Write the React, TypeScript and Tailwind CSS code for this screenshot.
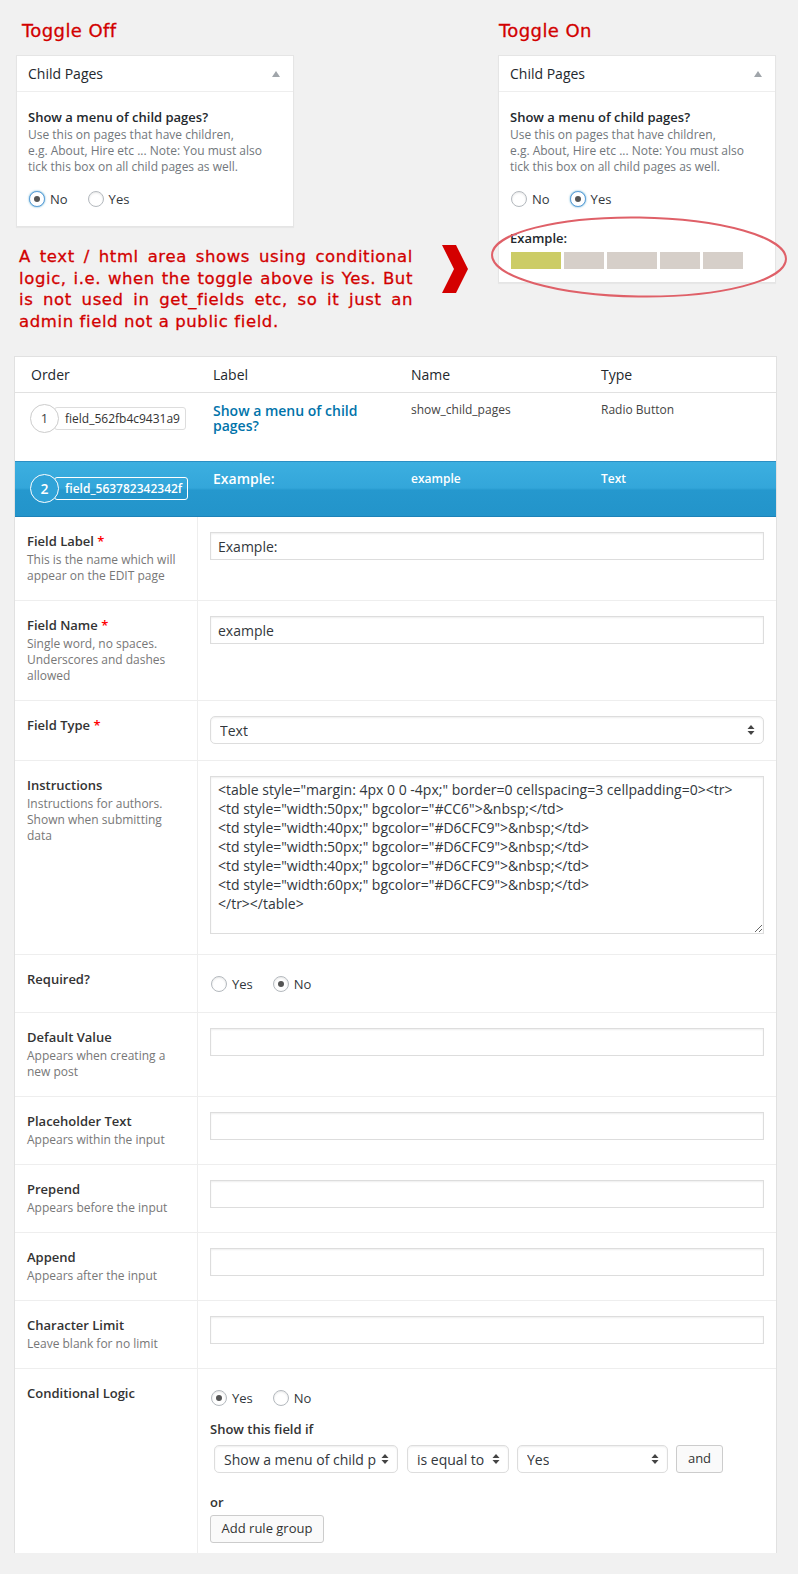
import React from "react"

function Radio({ label, checked, focus }: { label: string; checked?: boolean; focus?: boolean }) {
  return (
    <span className="flex items-center gap-[5px]">
      <span
        className={
          focus
            ? "flex h-4 w-4 items-center justify-center rounded-full border border-[#5b9dd9] bg-white shadow-[0_0_2px_rgba(30,140,190,0.8)]"
            : "flex h-4 w-4 items-center justify-center rounded-full border border-[#b4b9be] bg-white shadow-[inset_0_1px_2px_rgba(0,0,0,0.1)]"
        }
      >
        {checked && <span className="h-[6px] w-[6px] rounded-full bg-[#555]" />}
      </span>
      <span className="text-[13px] leading-4 text-[#32373c]">{label}</span>
    </span>
  )
}

function Arrows() {
  return (
    <svg width="8" height="12" viewBox="0 0 8 12" className="shrink-0">
      <polygon points="4,1 7.5,5 0.5,5" fill="#444" />
      <polygon points="0.5,7 7.5,7 4,11" fill="#444" />
    </svg>
  )
}

function Select({ value, className }: { value: string; className: string }) {
  return (
    <div
      className={
        "flex h-[28px] items-center justify-between rounded-[5px] border border-[#ddd] bg-white pl-[9px] pr-[8px] text-[14px] text-[#32373c] shadow-[inset_0_1px_2px_rgba(0,0,0,0.07)] " +
        className
      }
    >
      <span className="overflow-hidden whitespace-nowrap">{value}</span>
      <Arrows />
    </div>
  )
}

function Input({ value }: { value?: string }) {
  return (
    <div className="flex h-[28px] w-full items-center border border-[#ddd] bg-white pl-[7px] text-[14px] text-[#32373c] shadow-[inset_0_1px_2px_rgba(0,0,0,0.07)]">
      {value}
    </div>
  )
}

function ChildPagesBox({ on }: { on?: boolean }) {
  return (
    <div className="w-[278px] border border-[#e5e5e5] bg-white shadow-[0_1px_1px_rgba(0,0,0,0.04)]">
      <div className="flex h-[36px] items-center justify-between border-b border-[#eee] pl-[11px] pr-[13px]">
        <span className="text-[14px] text-[#23282d]">Child Pages</span>
        <svg width="8" height="6" viewBox="0 0 8 6">
          <polygon points="0,6 4,0 8,6" fill="#a0a5aa" />
        </svg>
      </div>
      <div className={on ? "px-[11px] pb-[13px] pt-[17px]" : "px-[11px] pb-[19px] pt-[17px]"}>
        <div className="text-[13px] font-semibold leading-4 text-[#23282d]">Show a menu of child pages?</div>
        <div className="mt-[2px] whitespace-nowrap text-[12px] leading-4 text-[#72777c]">
          Use this on pages that have children,
          <br />
          e.g. About, Hire etc ... Note: You must also
          <br />
          tick this box on all child pages as well.
        </div>
        <div className="mt-[16px] flex gap-[20px] pl-px">
          <Radio label="No" checked={!on} focus={!on} />
          <Radio label="Yes" checked={on} focus={on} />
        </div>
        {on && (
          <>
            <div className="mt-[23px] text-[13px] font-semibold leading-4 text-[#23282d]">Example:</div>
            <div className="mt-[6px] flex gap-[3px] pl-px">
              <div className="h-[17px] w-[50px] bg-[#cccc66]" />
              <div className="h-[17px] w-[40px] bg-[#d6cfc9]" />
              <div className="h-[17px] w-[50px] bg-[#d6cfc9]" />
              <div className="h-[17px] w-[40px] bg-[#d6cfc9]" />
              <div className="h-[17px] w-[40px] bg-[#d6cfc9]" />
            </div>
          </>
        )}
      </div>
    </div>
  )
}

function Row({
  label,
  required,
  desc,
  right,
  children,
}: {
  label: string
  required?: boolean
  desc?: string[]
  right?: string
  children?: React.ReactNode
}) {
  return (
    <div className="flex border-t border-[#eee]">
      <div className="w-[183px] shrink-0 border-r border-[#eee] pb-[16px] pl-[12px] pt-[16px]">
        <div className="text-[13px] font-semibold leading-4 text-[#333]">
          {label}
          {required && <span className="text-[#f00]"> *</span>}
        </div>
        {desc && (
          <div className="mt-[3px] whitespace-nowrap text-[12px] leading-4 text-[#777]">
            {desc.map((d) => (
              <div key={d}>{d}</div>
            ))}
          </div>
        )}
      </div>
      <div className={"flex-1 pl-[12px] pr-[12px] " + (right ?? "pb-[16px] pt-[15px]")}>{children}</div>
    </div>
  )
}

const redText = "font-['DejaVu_Sans',sans-serif] text-[#d20000] [-webkit-text-stroke:0.3px_#d20000]"

const instructions = `<table style="margin: 4px 0 0 -4px;" border=0 cellspacing=3 cellpadding=0><tr>
<td style="width:50px;" bgcolor="#CC6">&nbsp;</td>
<td style="width:40px;" bgcolor="#D6CFC9">&nbsp;</td>
<td style="width:50px;" bgcolor="#D6CFC9">&nbsp;</td>
<td style="width:40px;" bgcolor="#D6CFC9">&nbsp;</td>
<td style="width:60px;" bgcolor="#D6CFC9">&nbsp;</td>
</tr></table>`

export default function App() {
  return (
    <div className="min-h-[1574px] w-[798px] bg-[#f1f1f1] font-['Open_Sans',sans-serif] text-[#444]">
      <div className="flex h-[356px]">
        <div className="w-[498px] shrink-0 pl-[16px] pt-[20px]">
          <div className={"ml-[6px] h-[22px] text-[18px] leading-[22px] tracking-[0.4px] " + redText}>Toggle Off</div>
          <div className="mt-[13px]">
            <ChildPagesBox />
          </div>
          <div className="mt-[19px] flex items-start">
            <div className={"ml-[3px] w-[394px] text-[16.5px] leading-[21.7px] tracking-[0.6px] " + redText}>
              <div className="text-justify [text-align-last:justify]">A text / html area shows using conditional</div>
              <div className="text-justify [text-align-last:justify]">logic, i.e. when the toggle above is Yes. But</div>
              <div className="text-justify [text-align-last:justify]">is not used in get_fields etc, so it just an</div>
              <div>admin field not a public field.</div>
            </div>
            <svg width="26" height="48" viewBox="0 0 26 48" className="ml-[29px] mt-[-1px]">
              <polygon points="0,0 14,0 26,24 14,48 0,48 12,24" fill="#d40000" />
            </svg>
          </div>
        </div>
        <div className="relative w-[278px] shrink-0 pt-[20px]">
          <div className={"ml-px h-[22px] text-[18px] leading-[22px] tracking-[0.4px] " + redText}>Toggle On</div>
          <div className="mt-[13px]">
            <ChildPagesBox on />
          </div>
          <svg width="300" height="84" viewBox="0 0 300 84" className="absolute left-[-8px] top-[216px]">
            <ellipse cx="149" cy="41" rx="147" ry="39.5" fill="none" stroke="#df6068" strokeWidth="2" transform="rotate(0.8 149 41)" />
          </svg>
        </div>
      </div>

      <div className="ml-[14px] w-[763px] border border-b-0 border-[#e1e1e1] bg-white">
        <div className="flex h-[36px] items-center border-b border-[#e1e1e1] pl-[16px] text-[14px] font-medium text-[#23282d]">
          <div className="w-[182px]">Order</div>
          <div className="w-[198px]">Label</div>
          <div className="w-[190px]">Name</div>
          <div>Type</div>
        </div>

        <div className="flex h-[68px] items-start pl-[15px] pt-[10px]">
          <div className="mt-px flex w-[183px] items-center">
            <div className="relative z-10 flex h-[29px] w-[29px] items-center justify-center rounded-full border border-[#ccc] bg-white text-[13px] text-[#444]">
              1
            </div>
            <div className="-ml-[5px] flex h-[23px] items-center rounded-[3px] border border-[#ddd] pl-[10px] pr-[5px] text-[12px] text-[#333]">
              field_562fb4c9431a9
            </div>
          </div>
          <div className="w-[198px] text-[14px] font-semibold leading-[15px] text-[#0073aa]">
            Show a menu of child
            <br />
            pages?
          </div>
          <div className="w-[190px] text-[12px] leading-[14px] text-[#444]">show_child_pages</div>
          <div className="text-[12px] leading-[14px] text-[#444]">Radio Button</div>
        </div>

        <div className="flex h-[56px] items-start border-b border-t border-b-[#1d82b8] border-t-[#2b8fc4] bg-[linear-gradient(to_bottom,#3cafe0,#33a6da_48%,#2598ce_52%,#2394ca)] pl-[15px] pt-[10px] text-white">
          <div className="mt-[2px] flex w-[183px] items-center">
            <div className="relative z-10 flex h-[29px] w-[29px] items-center justify-center rounded-full border border-white bg-[#30a3d8] text-[14px] font-semibold">
              2
            </div>
            <div className="-ml-[5px] flex h-[23px] items-center rounded-[3px] border border-white pl-[10px] pr-[5px] text-[12px] font-semibold">
              field_563782342342f
            </div>
          </div>
          <div className="w-[198px] text-[14px] font-semibold leading-[14px]">Example:</div>
          <div className="w-[190px] text-[12px] font-semibold leading-[14px]">example</div>
          <div className="text-[12px] font-semibold leading-[14px]">Text</div>
        </div>

        <div className="[&>div:first-child]:border-t-0">
          <Row label="Field Label" required desc={["This is the name which will", "appear on the EDIT page"]}>
            <Input value="Example:" />
          </Row>
          <Row label="Field Name" required desc={["Single word, no spaces.", "Underscores and dashes", "allowed"]}>
            <Input value="example" />
          </Row>
          <Row label="Field Type" required>
            <Select value="Text" className="w-full" />
          </Row>
          <Row
            label="Instructions"
            desc={["Instructions for authors.", "Shown when submitting", "data"]}
            right="pb-[20px] pt-[15px]"
          >
            <textarea
              readOnly
              value={instructions}
              className="block h-[158px] w-full resize-y border border-[#ddd] bg-white pl-[7px] pt-[3px] font-['Open_Sans',sans-serif] text-[14px] leading-[19px] text-[#32373c] shadow-[inset_0_1px_2px_rgba(0,0,0,0.07)] outline-none"
            />
          </Row>
          <Row label="Required?" right="pb-[20px] pt-[21px]">
            <div className="flex gap-[20px] pl-px">
              <Radio label="Yes" />
              <Radio label="No" checked />
            </div>
          </Row>
          <Row label="Default Value" desc={["Appears when creating a", "new post"]}>
            <Input />
          </Row>
          <Row label="Placeholder Text" desc={["Appears within the input"]}>
            <Input />
          </Row>
          <Row label="Prepend" desc={["Appears before the input"]}>
            <Input />
          </Row>
          <Row label="Append" desc={["Appears after the input"]}>
            <Input />
          </Row>
          <Row label="Character Limit" desc={["Leave blank for no limit"]}>
            <Input />
          </Row>
          <Row label="Conditional Logic" right="pb-[10px] pt-[21px]">
            <div className="flex gap-[20px] pl-px">
              <Radio label="Yes" checked />
              <Radio label="No" />
            </div>
            <div className="mt-[15px] text-[13px] font-semibold leading-4 text-[#333]">Show this field if</div>
            <div className="ml-[4px] mt-[8px] flex items-center">
              <Select value="Show a menu of child p" className="w-[184px]" />
              <Select value="is equal to" className="ml-[9px] w-[102px]" />
              <Select value="Yes" className="ml-[8px] w-[151px]" />
              <div className="ml-[8px] flex h-[28px] w-[47px] items-center justify-center rounded-[3px] border border-[#ccc] bg-[#fafafa] text-[13px] text-[#333]">
                and
              </div>
            </div>
            <div className="mt-[21px] text-[13px] font-semibold leading-4 text-[#333]">or</div>
            <div className="mt-[5px] flex h-[28px] w-[114px] items-center justify-center rounded-[3px] border border-[#ccc] bg-[#fafafa] text-[13px] text-[#333]">
              Add rule group
            </div>
          </Row>
        </div>
      </div>
    </div>
  )
}
